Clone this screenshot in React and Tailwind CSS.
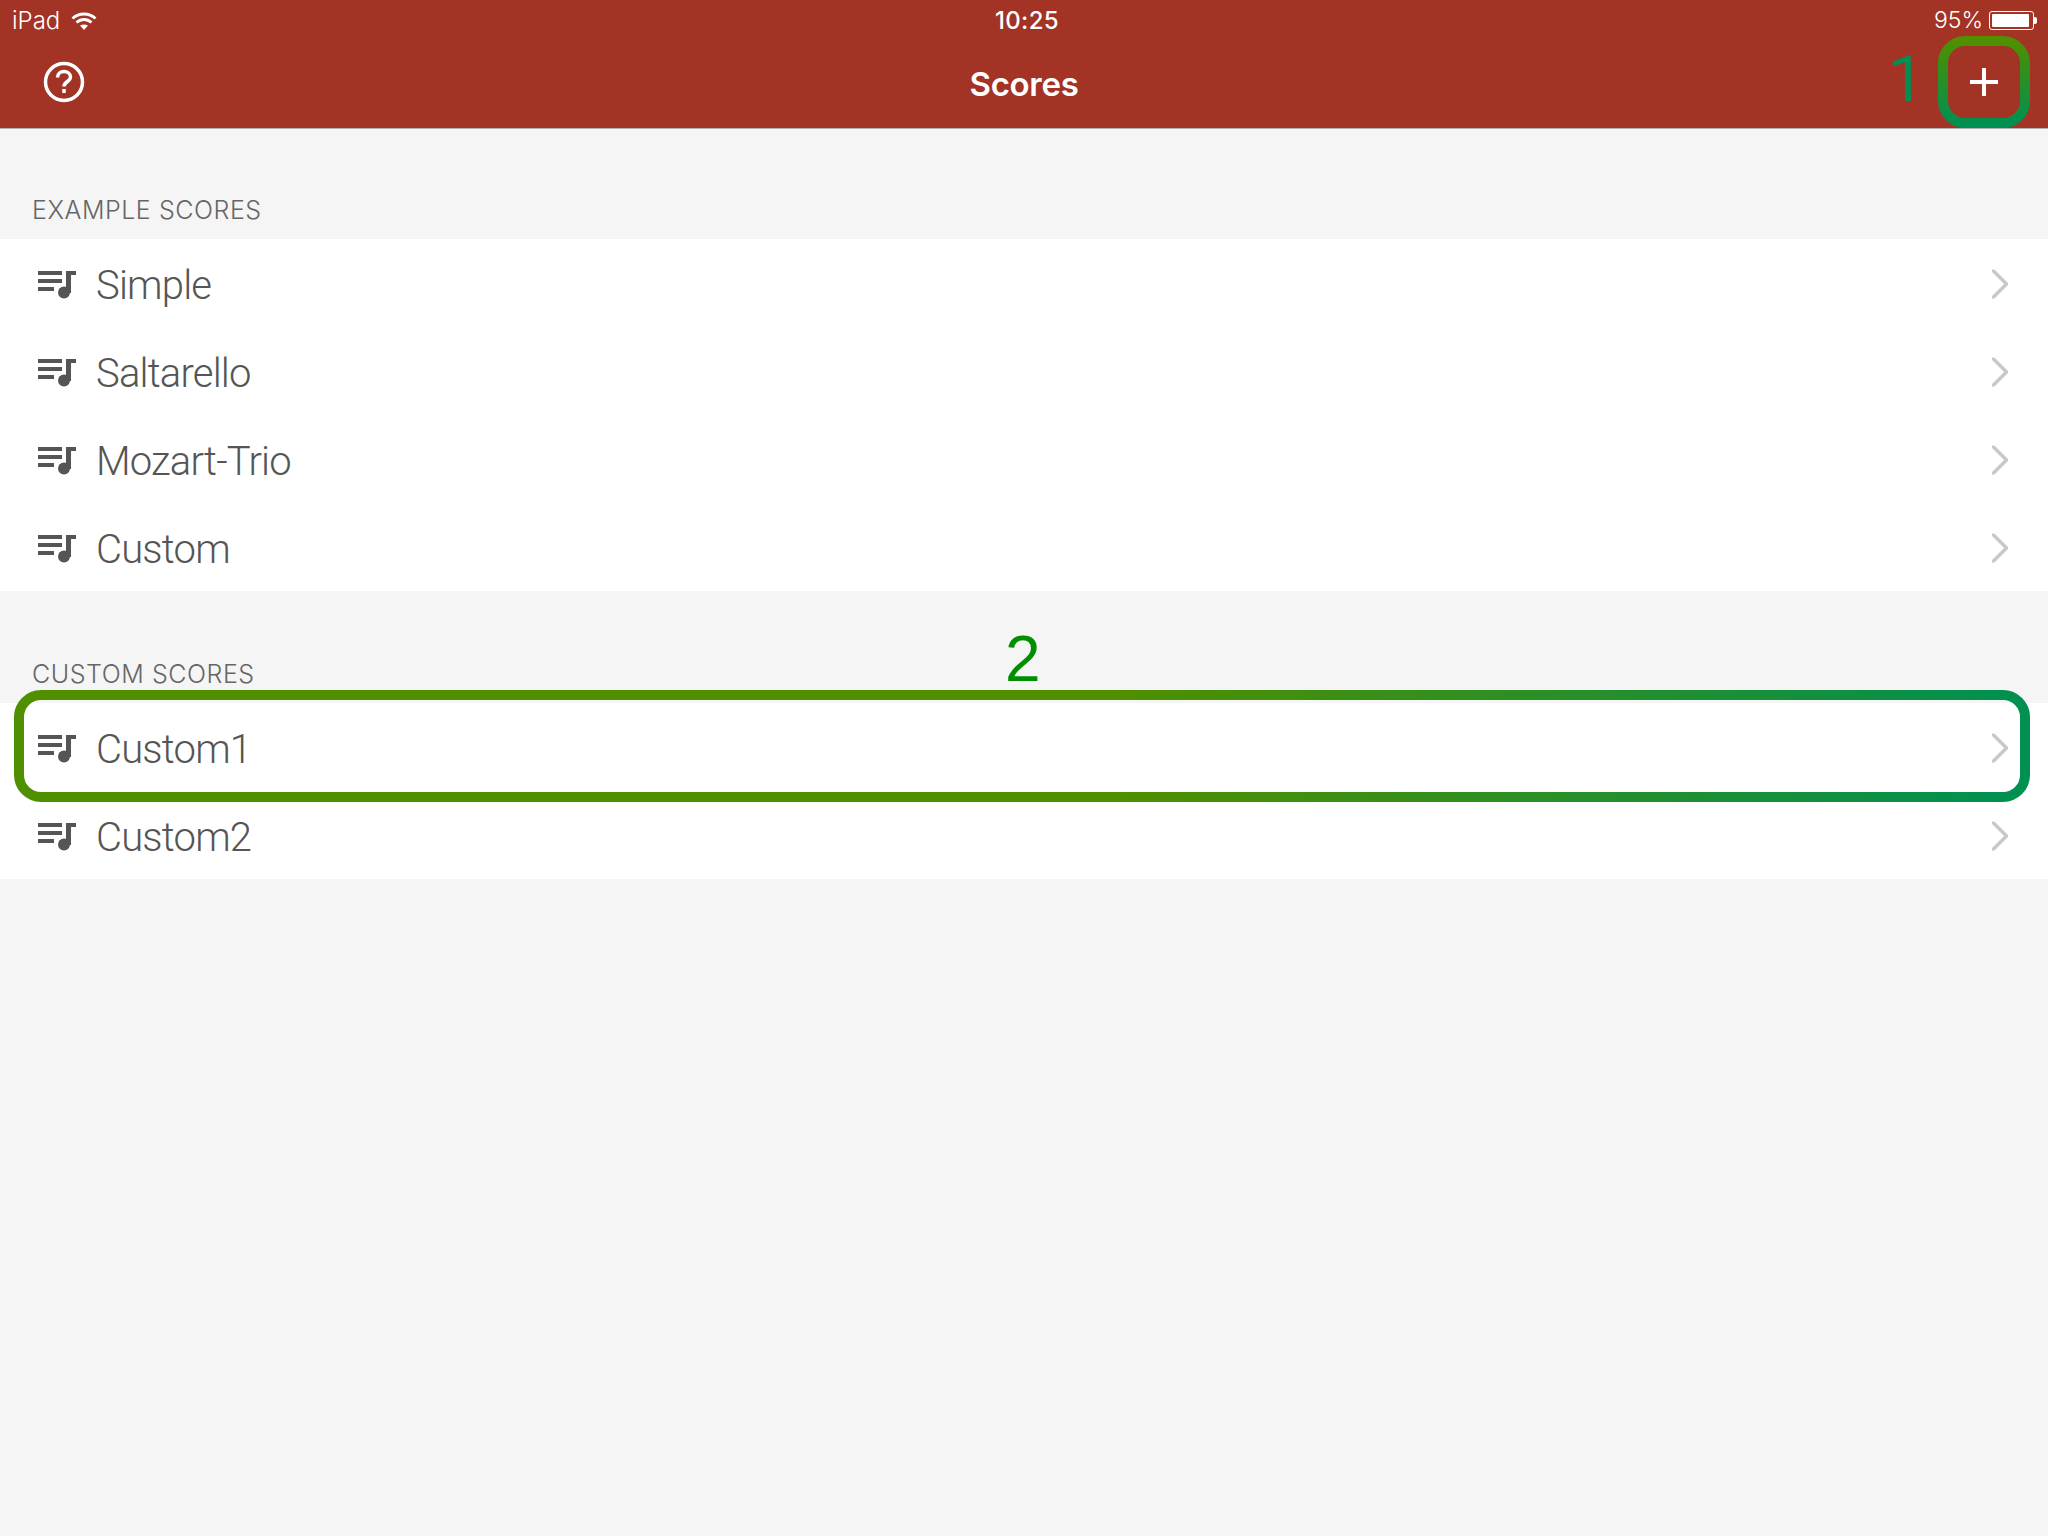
import { ChevronRight } from 'lucide-react';

const exampleScores = ['Simple', 'Saltarello', 'Mozart-Trio', 'Custom'];
const customScores = ['Custom1', 'Custom2'];

const NoteListIcon = () => (
  <svg width="38" height="30" viewBox="0 0 38 30" className="shrink-0 mt-[4px] text-[#555555]" fill="currentColor">
    <rect x="0" y="1" width="24" height="4" />
    <rect x="0" y="9" width="24" height="4" />
    <rect x="0" y="17" width="16" height="4" />
    <path d="M28 1h10v4h-5v18h-5z" />
    <circle cx="26" cy="22.500" r="6" />
  </svg>
);

const Row = ({ name }) => (
  <div className="h-[88px] flex items-center pl-[38px] pr-[22px] bg-white">
    <NoteListIcon />
    <span className="ml-[20px] pt-[5px] text-[40px] font-light tracking-[-0.8px] text-[#555555] font-['Roboto',sans-serif]">{name}</span>
    <ChevronRight className="ml-auto mt-[1px] w-[52px] h-[52px] text-[#c8c8cc]" strokeWidth={1.6} />
  </div>
);

const Section = ({ title, items, top }) => (
  <section>
    <div className={`${top} pl-[32px] pb-[14px] text-[25px] leading-[30px] font-light tracking-[0.55px] text-[#666666]`}>{title}</div>
    {items.map((name) => (
      <Row key={name} name={name} />
    ))}
  </section>
);

// green annotation frame, drawn over the screenshot
const Frame = ({ className, width, height, vertical, id }) => (
  <svg className={`absolute ${className}`} width={width} height={height} fill="none">
    <defs>
      <linearGradient id={id} x1="0" y1="0" x2={vertical ? 0 : 1} y2={vertical ? 1 : 0}>
        <stop offset={vertical ? '0' : '0.55'} stopColor="#4f8f00" />
        <stop offset="1" stopColor="#009051" />
      </linearGradient>
    </defs>
    <rect x="5" y="5" width={width - 10} height={height - 10} rx="22" stroke={`url(#${id})`} strokeWidth="10" />
  </svg>
);

export default function App() {
  return (
    <div className="relative h-[1536px] overflow-hidden bg-[#f5f5f5] font-['Inter','Liberation_Sans',sans-serif]">
      {/* Header */}
      <header className="bg-[#a23325] border-b border-[#b2b2b2] text-white">
        <div className="h-[40px] pt-[1px] grid grid-cols-3 items-center px-[12px] text-[24px] font-light">
          <div className="flex items-center gap-[11px]">
            <span>iPad</span>
            <svg width="26" height="20" viewBox="0 0 26 20" fill="none" stroke="currentColor" strokeWidth="3">
              <path d="M1.5 7.5c6.5-6 16.500-6 23 0" />
              <path d="M5.500 11.500c4.500-4 10.500-4 15 0" />
              <path d="M13 19l-4-4.500c2.500-1.500 5.500-1.500 8 0z" fill="currentColor" stroke="none" />
            </svg>
          </div>
          <div className="text-center font-medium pl-[6px] tracking-[0.3px]">10:25</div>
          <div className="flex items-center justify-end gap-[6px] text-[23px]">
            <span>95%</span>
            <div className="flex items-center mr-[-1px]">
              <div className="w-[45px] h-[19px] border border-white rounded-[3px] p-[2px]">
                <div className="h-full w-[95%] bg-white rounded-[1px]" />
              </div>
              <div className="w-[3px] h-[7px] bg-white rounded-r-[2px]" />
            </div>
          </div>
        </div>
        <div className="h-[88px] grid grid-cols-3 items-center pl-[43px] pr-[50px] pb-[4px]">
          <svg width="42" height="42" viewBox="0 0 42 42" fill="none" stroke="currentColor" strokeWidth="3.500">
            <circle cx="21" cy="21" r="18.500" />
            <path d="M14.500 16.500c0-4 3-6 6.500-6s6.500 2.200 6.500 5.500c0 4.500-6.500 4.500-6.500 9.500" />
            <path d="M21 28v4" />
          </svg>
          <h1 className="text-center text-[33px] font-semibold tracking-[-0.3px] pt-[5px] pl-[7px]">Scores</h1>
          <svg width="28" height="28" viewBox="0 0 28 28" stroke="currentColor" strokeWidth="4" className="justify-self-end">
            <path d="M14 0v28M0 14h28" />
          </svg>
        </div>
      </header>

      {/* Lists */}
      <main>
        <Section title="EXAMPLE SCORES" items={exampleScores} top="pt-[66px]" />
        <Section title="CUSTOM SCORES" items={customScores} top="pt-[68px]" />
      </main>

      {/* Annotations */}
      <Frame id="plus-frame" className="left-[1938px] top-[36px]" width={92} height={92} vertical />
      <Frame id="row-frame" className="left-[14px] top-[690px]" width={2016} height={112} />
      <span className="absolute left-[1888px] top-[40px] text-[64px] leading-[80px] text-[#009051] font-['Roboto',sans-serif]">1</span>
      <span className="absolute left-[1005px] top-[619px] text-[64px] leading-[80px] text-[#008f00] font-['Liberation_Sans',sans-serif]">2</span>
    </div>
  );
}
